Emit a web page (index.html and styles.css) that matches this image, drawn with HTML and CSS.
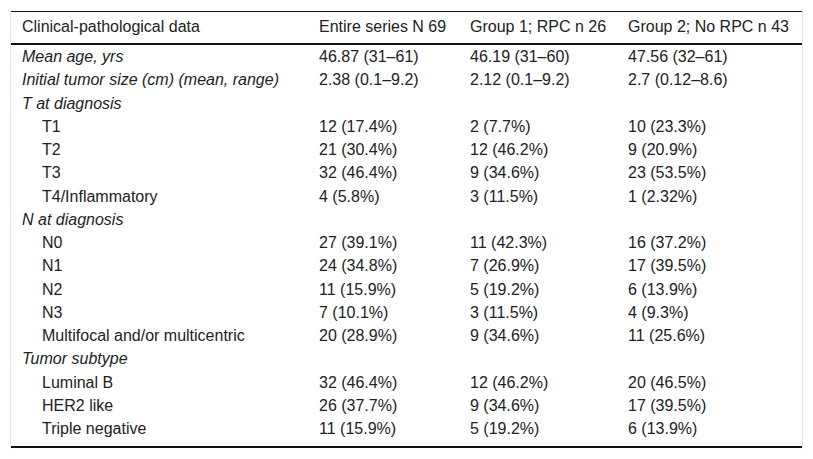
FILE: index.html
```html
<!DOCTYPE html>
<html lang="en">
<head>
<meta charset="utf-8">
<title>Table</title>
<link rel="stylesheet" href="styles.css">
</head>
<body>
<div class="wrap">
<table class="data">
<colgroup>
<col class="c1"><col class="c2"><col class="c3"><col class="c4">
</colgroup>
<thead>
<tr><th>Clinical-pathological data</th><th>Entire series N 69</th><th>Group 1; RPC n 26</th><th>Group 2; No RPC n 43</th></tr>
</thead>
<tbody>
<tr><td class="cat">Mean age, yrs</td><td>46.87 (31–61)</td><td>46.19 (31–60)</td><td>47.56 (32–61)</td></tr>
<tr><td class="cat">Initial tumor size (cm) (mean, range)</td><td>2.38 (0.1–9.2)</td><td>2.12 (0.1–9.2)</td><td>2.7 (0.12–8.6)</td></tr>
<tr><td class="cat">T at diagnosis</td><td></td><td></td><td></td></tr>
<tr><td class="sub">T1</td><td>12 (17.4%)</td><td>2 (7.7%)</td><td>10 (23.3%)</td></tr>
<tr><td class="sub">T2</td><td>21 (30.4%)</td><td>12 (46.2%)</td><td>9 (20.9%)</td></tr>
<tr><td class="sub">T3</td><td>32 (46.4%)</td><td>9 (34.6%)</td><td>23 (53.5%)</td></tr>
<tr><td class="sub">T4/Inflammatory</td><td>4 (5.8%)</td><td>3 (11.5%)</td><td>1 (2.32%)</td></tr>
<tr><td class="cat">N at diagnosis</td><td></td><td></td><td></td></tr>
<tr><td class="sub">N0</td><td>27 (39.1%)</td><td>11 (42.3%)</td><td>16 (37.2%)</td></tr>
<tr><td class="sub">N1</td><td>24 (34.8%)</td><td>7 (26.9%)</td><td>17 (39.5%)</td></tr>
<tr><td class="sub">N2</td><td>11 (15.9%)</td><td>5 (19.2%)</td><td>6 (13.9%)</td></tr>
<tr><td class="sub">N3</td><td>7 (10.1%)</td><td>3 (11.5%)</td><td>4 (9.3%)</td></tr>
<tr><td class="sub">Multifocal and/or multicentric</td><td>20 (28.9%)</td><td>9 (34.6%)</td><td>11 (25.6%)</td></tr>
<tr><td class="cat">Tumor subtype</td><td></td><td></td><td></td></tr>
<tr><td class="sub">Luminal B</td><td>32 (46.4%)</td><td>12 (46.2%)</td><td>20 (46.5%)</td></tr>
<tr><td class="sub">HER2 like</td><td>26 (37.7%)</td><td>9 (34.6%)</td><td>17 (39.5%)</td></tr>
<tr class="last"><td class="sub">Triple negative</td><td>11 (15.9%)</td><td>5 (19.2%)</td><td>6 (13.9%)</td></tr>
</tbody>
</table>
</div>
</body>
</html>
```
FILE: styles.css
```css
html, body {
  margin: 0;
  padding: 0;
  background: #fff;
}
body {
  font-family: "Liberation Sans", Arial, sans-serif;
  font-size: 16px;
  color: #222;
}
.wrap {
  margin: 11px 0 0 10px;
  width: 791px;
  border-left: 1px solid #e6e6e6;
  border-right: 1px solid #e6e6e6;
  padding-bottom: 1px;
}
.data {
  width: 791px;
  border-collapse: collapse;
  table-layout: fixed;
  border-top: 1px solid #111;
  border-bottom: 2px solid #111;
}
.c1 { width: 297px; }
.c2 { width: 151px; }
.c3 { width: 158px; }
.c4 { width: 185px; }
.data th {
  font-weight: normal;
  text-align: left;
  line-height: 19px;
  padding: 5px 0 7px 11px;
  border-bottom: 2px solid #111;
  white-space: nowrap;
}
.data td {
  line-height: 19.27px;
  padding: 2px 0 2px 11px;
  white-space: nowrap;
  vertical-align: top;
}
.data td.cat {
  font-style: italic;
}
.data td.sub {
  padding-left: 31px;
}
.data tr.last td {
  padding-bottom: 7px;
}
```
